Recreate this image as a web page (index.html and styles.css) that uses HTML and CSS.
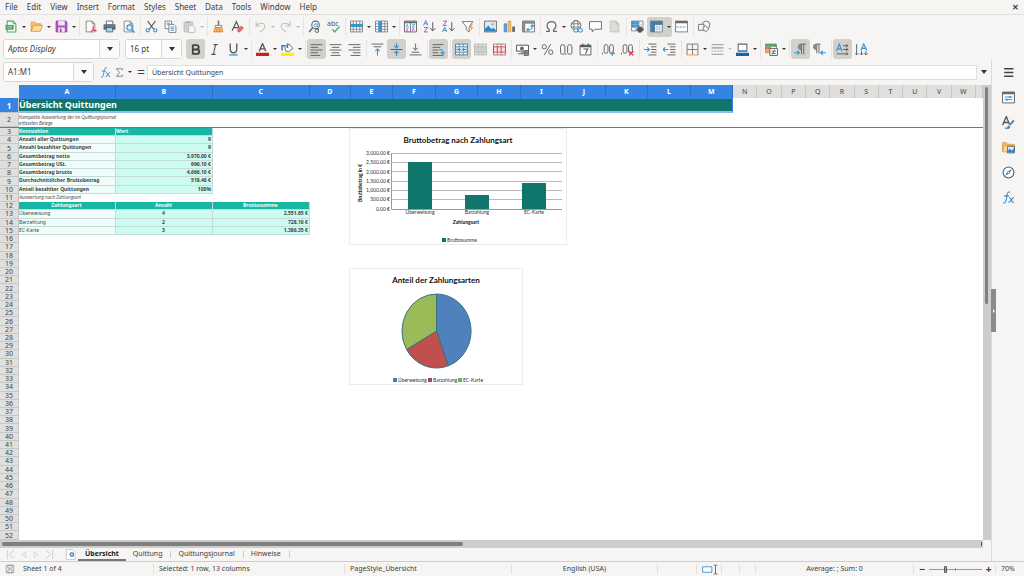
FILE: index.html
```html
<!DOCTYPE html>
<html lang="de">
<head>
<meta charset="utf-8">
<title>Übersicht Quittungen</title>
<link rel="stylesheet" href="styles.css">
</head>
<body>
<svg class="sprite" aria-hidden="true">
  <symbol id="new" viewBox="0 0 24 24"><path d="M4 2h11l5 5v15H4z" fill="#fff" stroke="#4aa564" stroke-width="2"/><path d="M15 2v5h5" fill="#9fd8ae" stroke="#4aa564" stroke-width="1.5"/><path d="M1 9h15v9H1z" fill="#3da35d"/><path d="M4 12h9M4 15h9" stroke="#a8e0b8" stroke-width="1.5"/></symbol>
  <symbol id="open" viewBox="0 0 24 24"><path d="M2 21V4h7l2 3h9v4" fill="#f3c576" stroke="#d9973c" stroke-width="1.5"/><path d="M2 21l4-11h17l-4 11z" fill="#fbdc9c" stroke="#d9973c" stroke-width="1.5"/></symbol>
  <symbol id="save" viewBox="0 0 24 24"><path d="M2 2h18l2 2v18H2z" fill="#b357c4" stroke="#8e3fa5" stroke-width="1.5"/><path d="M6 2h12v8H6z" fill="#f5e6f8"/><path d="M6 14h12v8H6z" fill="#f5e6f8"/><path d="M9 16h3v6H9z" fill="#8e3fa5"/></symbol>
  <symbol id="pdf" viewBox="0 0 24 24"><path d="M4 2h11l5 5v15H4z" fill="#fafafa" stroke="#777" stroke-width="1.5"/><path d="M15 2v5h5" fill="none" stroke="#777" stroke-width="1.5"/><path d="M17 10v6M13 21c3-1 4-3 4-6 1 4 3 5 6 5M13 21c3-3 7-2 10-1" fill="none" stroke="#d63a44" stroke-width="1.7"/></symbol>
  <symbol id="print" viewBox="0 0 24 24"><path d="M6 2h12v7H6z" fill="#fff" stroke="#555" stroke-width="1.5"/><path d="M1 8h22v10H1z" fill="#5f6468"/><path d="M3 11h18" stroke="#4b9bd4" stroke-width="2"/><path d="M6 14h12v8H6z" fill="#a9d4f2" stroke="#555" stroke-width="1.5"/></symbol>
  <symbol id="preview" viewBox="0 0 24 24"><path d="M4 2h11l5 5v15H4z" fill="#fafafa" stroke="#777" stroke-width="1.5"/><path d="M15 2v5h5" fill="none" stroke="#777" stroke-width="1.5"/><circle cx="14" cy="14" r="5" fill="#dff0fb" stroke="#2f8fca" stroke-width="2"/><path d="M18 18l5 5" stroke="#2f8fca" stroke-width="2.2"/></symbol>
  <symbol id="cut" viewBox="0 0 24 24"><path d="M5 2l11 15M19 2L8 17" stroke="#555" stroke-width="2"/><circle cx="5" cy="19" r="3" fill="none" stroke="#3a94d0" stroke-width="2"/><circle cx="19" cy="19" r="3" fill="none" stroke="#3a94d0" stroke-width="2"/></symbol>
  <symbol id="copy" viewBox="0 0 24 24"><path d="M2 2h12v14H2z" fill="#fff" stroke="#777" stroke-width="1.6"/><path d="M5 6h6M5 9h4" stroke="#3a94d0" stroke-width="1.6"/><path d="M9 8h9l4 4v11H9z" fill="#fff" stroke="#777" stroke-width="1.6"/><path d="M12 13h7M12 16h7M12 19h7" stroke="#3a94d0" stroke-width="1.6"/></symbol>
  <symbol id="paste" viewBox="0 0 24 24"><path d="M2 4h16v18H2z" fill="#d4d3d0" stroke="#b5b5b5" stroke-width="1.5"/><path d="M6 2h8v4H6z" fill="#b5b5b5"/><path d="M10 10h8l4 4v9H10z" fill="#f6f5f3" stroke="#b5b5b5" stroke-width="1.5"/></symbol>
  <symbol id="clone" viewBox="0 0 24 24"><path d="M12 1v9" stroke="#777" stroke-width="3"/><path d="M6 10h12v4H6z" fill="#fff" stroke="#777" stroke-width="1.5"/><path d="M6 14h12l2 8H3z" fill="#f6b463" stroke="#d9852c" stroke-width="1.5"/><path d="M9 17v5M14 17v5" stroke="#d9852c" stroke-width="1.5"/></symbol>
  <symbol id="clear" viewBox="0 0 24 24"><path d="M2 20L10 3l6 14M5 14h8" fill="none" stroke="#555" stroke-width="2.2"/><path d="M12 18l7-7 4 4-7 7h-3z" fill="#ef6a70" stroke="#d63a44"/></symbol>
  <symbol id="undo" viewBox="0 0 24 24"><path d="M4 3v8h8M4 11C8 4 20 4 20 12c0 4-4 7-9 10" fill="none" stroke="#c2c1be" stroke-width="2"/></symbol>
  <symbol id="redo" viewBox="0 0 24 24"><path d="M20 3v8h-8M20 11C16 4 4 4 4 12c0 4 4 7 9 10" fill="none" stroke="#c2c1be" stroke-width="2"/></symbol>
  <symbol id="find" viewBox="0 0 24 24"><circle cx="14" cy="9" r="7" fill="#fff" stroke="#666" stroke-width="2"/><path d="M9 14l-7 8" stroke="#666" stroke-width="2.6"/><path d="M17 6v7M17 9a3 3 0 1 0 0 2" fill="none" stroke="#3a94d0" stroke-width="1.8"/><path d="M19 23v-8M19 19a3 3 0 1 0 0 2" fill="none" stroke="#555" stroke-width="1.6"/></symbol>
  <symbol id="spell" viewBox="0 0 24 24"><text x="0" y="11" font-size="13" fill="#555">abc</text><path d="M10 17l4 5 9-10" fill="none" stroke="#3fae6c" stroke-width="2.4"/></symbol>
  <symbol id="row" viewBox="0 0 24 24"><path d="M1 2h22v20H1z" fill="#fff" stroke="#777" stroke-width="1.6"/><path d="M1 17h22M6 2v20M12 2v20M18 2v20" stroke="#777" stroke-width="1.4"/><path d="M1 7h22v6H1z" fill="#3a94d0"/></symbol>
  <symbol id="col" viewBox="0 0 24 24"><path d="M1 2h22v20H1z" fill="#fff" stroke="#777" stroke-width="1.6"/><path d="M1 7h22M1 12h22M1 17h22M18 2v20" stroke="#777" stroke-width="1.4"/><path d="M6 2h7v20H6z" fill="#3a94d0"/></symbol>
  <symbol id="sort" viewBox="0 0 24 24"><path d="M1 2h22v20H1z" fill="#fff" stroke="#666" stroke-width="1.8"/><path d="M1 3h22v3H1z" fill="#666"/><path d="M12 5v17" stroke="#666" stroke-width="1.5"/><path d="M4 13l2-5 2 5M15 8h5l-5 5h5" fill="none" stroke="#3a94d0" stroke-width="1.5"/><path d="M4 15h4l-4 5h4M15 20l2-5 2 5" fill="none" stroke="#b04fc2" stroke-width="1.5"/></symbol>
  <symbol id="az" viewBox="0 0 24 24"><path d="M1 10l4-9 4 9M3 7h5" fill="none" stroke="#3a94d0" stroke-width="1.8"/><path d="M2 14h7l-7 8h7" fill="none" stroke="#b04fc2" stroke-width="1.8"/><path d="M18 4v16M13 15l5 5 5-5" fill="none" stroke="#555" stroke-width="1.8"/></symbol>
  <symbol id="za" viewBox="0 0 24 24"><path d="M2 2h7l-7 8h7" fill="none" stroke="#b04fc2" stroke-width="1.8"/><path d="M1 22l4-9 4 9M3 19h5" fill="none" stroke="#3a94d0" stroke-width="1.8"/><path d="M18 4v16M13 15l5 5 5-5" fill="none" stroke="#555" stroke-width="1.8"/></symbol>
  <symbol id="filter" viewBox="0 0 24 24"><path d="M2 3h20l-7 10v9l-5-4v-5z" fill="#fff" stroke="#777" stroke-width="1.8"/><path d="M20 7l-5 8h4l-3 7 7-9h-4l3-6z" fill="#f4a34b"/></symbol>
  <symbol id="image" viewBox="0 0 24 24"><path d="M1 2h22v20H1z" fill="#d9edf9" stroke="#666" stroke-width="1.6"/><path d="M2 21v-5l6-6 6 7 3-3 5 5v2z" fill="#2f86c4"/><circle cx="16" cy="8" r="2.5" fill="#f4a34b"/></symbol>
  <symbol id="chart" viewBox="0 0 24 24"><path d="M2 7h5v15H2z" fill="#5aa7e0" stroke="#2f78b4"/><path d="M9.500 2h5v20h-5z" fill="#f6c069" stroke="#c9882f"/><path d="M17 12h5v10h-5z" fill="#666"/></symbol>
  <symbol id="pivot" viewBox="0 0 24 24"><path d="M1 2h22v20H1z" fill="#fff" stroke="#777" stroke-width="1.8"/><path d="M1 2h22v5H1zM1 2h5v20H1z" fill="#8a8a8a"/><path d="M10 18c8 1 9-2 9-8M16 12l3-3 3 3M12 15l-3 3 3 3" fill="none" stroke="#3a94d0" stroke-width="2"/></symbol>
  <symbol id="omega" viewBox="0 0 24 24"><path d="M2 21h6v-3C1 13 3 3 12 3s11 10 4 15v3h6" fill="none" stroke="#666" stroke-width="2"/></symbol>
  <symbol id="link" viewBox="0 0 24 24"><circle cx="11" cy="10" r="9" fill="#fff" stroke="#666" stroke-width="1.7"/><ellipse cx="11" cy="10" rx="4" ry="9" fill="none" stroke="#666" stroke-width="1.5"/><path d="M2 7h18M2 13h18" stroke="#666" stroke-width="1.5"/><rect x="7" y="16" width="8" height="6" rx="3" fill="#fff" stroke="#3a94d0" stroke-width="2"/><rect x="15" y="16" width="8" height="6" rx="3" fill="#fff" stroke="#3a94d0" stroke-width="2"/></symbol>
  <symbol id="comment" viewBox="0 0 24 24"><path d="M1 3h22v14H11l-5 5v-5H1z" fill="#fff" stroke="#666" stroke-width="1.7"/></symbol>
  <symbol id="header" viewBox="0 0 24 24"><path d="M4 2h11l5 5v15H4z" fill="#dddcd9" stroke="#bbb" stroke-width="1.5"/><path d="M15 2v5h5" fill="none" stroke="#bbb" stroke-width="1.5"/></symbol>
  <symbol id="area" viewBox="0 0 24 24"><path d="M1 2h21v18H1z" fill="#fff" stroke="#777" stroke-width="1.5"/><path d="M1 2h14v12H1z" fill="#3a94d0"/><path d="M1 8h21M1 14h21M8 2v18M15 2v18" stroke="#9bb4c6" stroke-width="1.2"/><path d="M10 15h13v5H10zM13 12h7v11h-7z" fill="#555"/></symbol>
  <symbol id="freeze" viewBox="0 0 24 24"><path d="M1 2h22v20H1z" fill="#fff" stroke="#777" stroke-width="1.5"/><path d="M1 2h22v6H1zM1 2h7v20H1z" fill="#2f86c4"/><path d="M8 13h15M8 17h15M13 8v14M18 8v14" stroke="#8ec3e8" stroke-width="1.4"/><path d="M8 8v14M8 8h15" stroke="#555" stroke-width="1.5"/></symbol>
  <symbol id="split" viewBox="0 0 24 24"><path d="M1 2h22v20H1z" fill="#fff" stroke="#777" stroke-width="1.7"/><path d="M1 2h22v4H1z" fill="#666"/><path d="M3 13h18" stroke="#3a94d0" stroke-width="2" stroke-dasharray="4 2"/></symbol>
  <symbol id="shapes" viewBox="0 0 24 24"><circle cx="15" cy="9" r="7" fill="none" stroke="#777" stroke-width="1.8"/><path d="M1 8h10v11H1z" fill="#f6f5f3" stroke="#777" stroke-width="1.8"/><path d="M13 10l7 7-6 5-5-6z" fill="#f6f5f3" stroke="#777" stroke-width="1.7"/></symbol>
  <symbol id="bold" viewBox="0 0 24 24"><path d="M7 3v18M7 4h6q5 0 5 4t-5 4H7h7q5 0 5 4t-5 4H7" fill="none" stroke="#444" stroke-width="3.400"/></symbol>
  <symbol id="italic" viewBox="0 0 24 24"><path d="M10 3h8M6 21h8M14 3l-4 18" fill="none" stroke="#555" stroke-width="2"/></symbol>
  <symbol id="under" viewBox="0 0 24 24"><path d="M6 1v10q0 7 6 7t6-7V1" fill="none" stroke="#555" stroke-width="2.4"/><path d="M4 22h16" stroke="#3a94d0" stroke-width="2.4"/></symbol>
  <symbol id="fcolor" viewBox="0 0 24 24"><path d="M6 15l6-14 6 14M8 11h8" fill="none" stroke="#555" stroke-width="2.400"/><path d="M0 18h24v6H0z" fill="#c9211e"/></symbol>
  <symbol id="fill" viewBox="0 0 24 24"><path d="M7 8l8-6 7 8-8 6-5-1z" fill="#fff" stroke="#666" stroke-width="1.7"/><path d="M2 14V5h6M12 1v8" fill="none" stroke="#2f78b4" stroke-width="2.600"/><path d="M0 18h24v6H0z" fill="#ffee00"/></symbol>
  <symbol id="left" viewBox="0 0 24 24"><path d="M1 3h22M1 8h14M1 13h22M1 18h14M1 23h18" stroke="#666" stroke-width="1.800"/></symbol>
  <symbol id="center" viewBox="0 0 24 24"><path d="M1 3h22M5 8h14M1 13h22M5 18h14M3 23h18" stroke="#666" stroke-width="1.800"/></symbol>
  <symbol id="right" viewBox="0 0 24 24"><path d="M1 3h22M9 8h14M1 13h22M9 18h14M5 23h18" stroke="#666" stroke-width="1.800"/></symbol>
  <symbol id="top" viewBox="0 0 24 24"><path d="M1 2h22M5 7h14" stroke="#666" stroke-width="1.800"/><path d="M12 23V11M8 15l4-4 4 4" fill="none" stroke="#3a94d0" stroke-width="2"/></symbol>
  <symbol id="middle" viewBox="0 0 24 24"><path d="M1 12h22" stroke="#666" stroke-width="2"/><path d="M12 0v9M8 5l4 4 4-4M12 24v-9M8 19l4-4 4 4" fill="none" stroke="#3a94d0" stroke-width="2"/></symbol>
  <symbol id="bottom" viewBox="0 0 24 24"><path d="M5 17h14M1 22h22" stroke="#666" stroke-width="1.800"/><path d="M12 1v12M8 9l4 4 4-4" fill="none" stroke="#3a94d0" stroke-width="2"/></symbol>
  <symbol id="wrap" viewBox="0 0 24 24"><path d="M1 3h20M1 8h14M1 13h11M1 18h11M1 23h20" stroke="#666" stroke-width="1.800"/><path d="M13 12c6 0 7 2 7 8M16 17l4 4 3-4" fill="none" stroke="#3a94d0" stroke-width="2"/></symbol>
  <symbol id="merge" viewBox="0 0 24 24"><path d="M1 2h22v20H1z" fill="#fff" stroke="#666" stroke-width="1.600"/><path d="M8 2v5M15 2v5M8 17v5M15 17v5" stroke="#666" stroke-width="1.500"/><path d="M1 7h22v10H1z" fill="#cfe6f6" stroke="#2f86c4" stroke-width="1.600"/><path d="M3 12h7M14 12h7M7 9l3 3-3 3M17 9l-3 3 3 3" fill="none" stroke="#2f86c4" stroke-width="1.700"/></symbol>
  <symbol id="mcells" viewBox="0 0 24 24"><path d="M1 2h22v20H1z" fill="#e4e3e0" stroke="#b5b5b5" stroke-width="1.600"/><path d="M1 7h22v10H1z" fill="#cfcecb"/><path d="M8 2v5M15 2v5M8 17v5M15 17v5M1 7h22M1 17h22" stroke="#b5b5b5" stroke-width="1.500"/></symbol>
  <symbol id="unmerge" viewBox="0 0 24 24"><path d="M1 2h22v20H1z" fill="#fff" stroke="#777" stroke-width="1.600"/><path d="M8 2v5M15 2v5M8 17v5M15 17v5" stroke="#777" stroke-width="1.500"/><path d="M1 7h22v10H1zM8 7v10M15 7v10" fill="#fbe1e2" stroke="#d63a44" stroke-width="1.700"/></symbol>
  <symbol id="money" viewBox="0 0 24 24"><path d="M1 4h22v11H1z" fill="#fff" stroke="#555" stroke-width="1.800"/><circle cx="11" cy="10" r="3.500" fill="#666"/><path d="M4 20h9v-4M15 14h8v9h-8zM15 17h8M15 20h8" fill="#aaa" stroke="#555" stroke-width="1.500"/></symbol>
  <symbol id="percent" viewBox="0 0 24 24"><circle cx="6" cy="7" r="4" fill="none" stroke="#666" stroke-width="1.800"/><circle cx="18" cy="17" r="4" fill="none" stroke="#666" stroke-width="1.800"/><path d="M18 2L6 22" stroke="#666" stroke-width="1.800"/></symbol>
  <symbol id="number" viewBox="0 0 24 24"><rect x="1" y="3" width="8" height="18" rx="4" fill="none" stroke="#666" stroke-width="1.800"/><path d="M11 19v3" stroke="#666" stroke-width="1.800"/><rect x="14" y="3" width="8" height="18" rx="4" fill="none" stroke="#666" stroke-width="1.800"/></symbol>
  <symbol id="date" viewBox="0 0 24 24"><path d="M2 4h20v18H2z" fill="#fff" stroke="#666" stroke-width="1.800"/><path d="M2 4h20v4H2zM6 1h2v4H6zM16 1h2v4h-2z" fill="#555"/><path d="M8 11h8l-4 9" fill="none" stroke="#555" stroke-width="2"/></symbol>
  <symbol id="adddec" viewBox="0 0 24 24"><path d="M1 18v3" stroke="#666" stroke-width="1.800"/><rect x="4" y="3" width="7" height="16" rx="3.500" fill="none" stroke="#666" stroke-width="1.800"/><rect x="14" y="3" width="7" height="16" rx="3.500" fill="none" stroke="#666" stroke-width="1.800"/><path d="M19 15v9M15 19h9" stroke="#3a94d0" stroke-width="2.200"/></symbol>
  <symbol id="deldec" viewBox="0 0 24 24"><path d="M1 18v3" stroke="#666" stroke-width="1.800"/><rect x="4" y="3" width="7" height="16" rx="3.500" fill="none" stroke="#666" stroke-width="1.800"/><rect x="14" y="3" width="7" height="16" rx="3.500" fill="none" stroke="#666" stroke-width="1.800"/><path d="M15 15l8 8M23 15l-8 8" stroke="#d63a44" stroke-width="2.200"/></symbol>
  <symbol id="indent" viewBox="0 0 24 24"><path d="M8 2h15M13 7h10M13 12h10M13 17h10M8 22h15" stroke="#666" stroke-width="1.800"/><path d="M0 12h10M6 8l4 4-4 4" fill="none" stroke="#3a94d0" stroke-width="2"/></symbol>
  <symbol id="outdent" viewBox="0 0 24 24"><path d="M8 2h15M13 7h10M13 12h10M13 17h10M8 22h15" stroke="#666" stroke-width="1.800"/><path d="M0 12h10M4 8l-4 4 4 4" fill="none" stroke="#3a94d0" stroke-width="2"/></symbol>
  <symbol id="borders" viewBox="0 0 24 24"><path d="M2 22V2h20v20M12 2v20M2 12h20" fill="none" stroke="#777" stroke-width="1.700"/><path d="M1 22h22" stroke="#f0a24a" stroke-width="2"/></symbol>
  <symbol id="bstyle" viewBox="0 0 24 24"><path d="M1 3h22M1 21h22" stroke="#aaa" stroke-width="2"/><path d="M1 9h22" stroke="#aaa" stroke-width="3"/><path d="M1 15h22" stroke="#aaa" stroke-width="2" stroke-dasharray="3 2"/></symbol>
  <symbol id="bcolor" viewBox="0 0 24 24"><path d="M4 2h16v13H4z" fill="#fff" stroke="#666" stroke-width="2"/><path d="M4 15h16" stroke="#3a94d0" stroke-width="3"/><path d="M0 18h24v6H0z" fill="#1d5fa3"/></symbol>
  <symbol id="cond" viewBox="0 0 24 24"><path d="M1 2h20v16H1z" fill="#fff" stroke="#777" stroke-width="1.500"/><path d="M1 2h20v5H1z" fill="#4aa564"/><path d="M1 7h10v5H1z" fill="#ef6a70"/><path d="M1 12h8v6H1z" fill="#f4a34b"/><path d="M9 10h14v13H9z" fill="#fff" stroke="#555" stroke-width="1.600"/><path d="M12 15h8M12 19h8M18 12l-4 9" stroke="#555" stroke-width="1.500"/></symbol>
  <symbol id="ltr" viewBox="0 0 24 24"><path d="M22 2h-9a5 5 0 0 0 0 10h1M14 2v19M18 2v19" fill="none" stroke="#666" stroke-width="1.800"/><path d="M13 3h-1a4 4 0 0 0 0 8h2z" fill="#888"/><path d="M0 18h10M6 14l4 4-4 4" fill="none" stroke="#3a94d0" stroke-width="2"/></symbol>
  <symbol id="rtl" viewBox="0 0 24 24"><path d="M14 2H6a5 5 0 0 0 0 10h1M7 2v17M11 2v17" fill="none" stroke="#666" stroke-width="1.800"/><path d="M7 3H5a4 4 0 0 0 0 8h2z" fill="#888"/><path d="M24 18H14M18 14l-4 4 4 4" fill="none" stroke="#3a94d0" stroke-width="2"/></symbol>
  <symbol id="horiz" viewBox="0 0 24 24"><path d="M1 15L6 2l5 13M3 11h7" fill="none" stroke="#3a94d0" stroke-width="2.200"/><path d="M13 5h9M13 12h9M1 20h21M19 2l3 3-3 3M19 9l3 3-3 3M19 17l3 3-3 3" fill="none" stroke="#555" stroke-width="1.700"/></symbol>
  <symbol id="vert" viewBox="0 0 24 24"><path d="M11 14l5-12 6 12M13 10h7" fill="none" stroke="#3a94d0" stroke-width="2.200"/><path d="M3 2v20M12 15v7M20 15v7M0 19l3 3 3-3M9 19l3 3 3-3M17 19l3 3 3-3" fill="none" stroke="#555" stroke-width="1.700"/></symbol>
  <symbol id="fx" viewBox="0 0 24 24"><path d="M2 22c4 1 5-2 6-7l1-7c1-5 2-7 6-6M4 9h9M13 12c5-1 3 10 9 9M22 12c-4 0-5 9-10 9" fill="none" stroke="#3584c8" stroke-width="1.900"/></symbol>
  <symbol id="sum" viewBox="0 0 24 24"><path d="M20 6V2H4l8 10-8 10h16v-4" fill="none" stroke="#666" stroke-width="2"/></symbol>
  <symbol id="menu" viewBox="0 0 24 24"><path d="M4 5h17M4 12h17M4 19h17" stroke="#444" stroke-width="2.600"/></symbol>
  <symbol id="props" viewBox="0 0 24 24"><path d="M1 2h22v20H1z" fill="#fff" stroke="#666" stroke-width="1.800"/><path d="M1 2h22v4H1z" fill="#666"/><path d="M5 11h14M5 16h14" stroke="#3a94d0" stroke-width="1.800"/><path d="M15 9v4M9 14v4" stroke="#3a94d0" stroke-width="2.400"/></symbol>
  <symbol id="styles" viewBox="0 0 24 24"><path d="M1 17L8 1l6 15M4 12h8" fill="none" stroke="#555" stroke-width="2.400"/><path d="M22 8l-8 9" stroke="#777" stroke-width="3.500"/><path d="M5 22c4 1 6-1 6-4l4 2c-1 4-6 5-10 2z" fill="#3584c8" stroke="#3584c8"/></symbol>
  <symbol id="gallery" viewBox="0 0 24 24"><path d="M1 20V3h7l2 3h12v3" fill="#f6c069" stroke="#d9973c" stroke-width="1.500"/><path d="M1 20l3-12h19v12z" fill="#fbdc9c" stroke="#d9973c" stroke-width="1.500"/><path d="M10 10h13v12H10z" fill="#d9edf9" stroke="#555" stroke-width="1.500"/><path d="M11 21v-3l3-4 4 4 4-5v8z" fill="#2f86c4"/></symbol>
  <symbol id="compass" viewBox="0 0 24 24"><circle cx="12" cy="12" r="10" fill="#fff" stroke="#555" stroke-width="1.900"/><path d="M18 6l-4 8-8 4 4-8z" fill="#3584c8"/><circle cx="12" cy="12" r="1.500" fill="#fff"/></symbol>
  <symbol id="disk" viewBox="0 0 24 24"><path d="M3 3h18v18H3zM7 3h10v7H7zM7 14h10v7H7z" fill="none" stroke="#888" stroke-width="1.700"/></symbol>
  <symbol id="first" viewBox="0 0 24 24"><path d="M5 2v20M20 3L9 12l11 9" fill="none" stroke="#cfcecb" stroke-width="2"/></symbol>
  <symbol id="prev" viewBox="0 0 24 24"><path d="M17 6l-8 6 8 6z" fill="none" stroke="#d4d3d0" stroke-width="2"/></symbol>
  <symbol id="next" viewBox="0 0 24 24"><path d="M7 6l8 6-8 6z" fill="none" stroke="#d4d3d0" stroke-width="2"/></symbol>
  <symbol id="last" viewBox="0 0 24 24"><path d="M19 2v20M4 3l11 9-11 9" fill="none" stroke="#cfcecb" stroke-width="2"/></symbol>
  <symbol id="addsheet" viewBox="0 0 24 24"><path d="M3 1h13l6 6v16H3z" fill="#fff" stroke="#bbb" stroke-width="1.500"/><circle cx="15" cy="12" r="5" fill="#3a74a8"/><path d="M15 9v6M12 12h6" stroke="#fff" stroke-width="1.500"/></symbol>
</svg>

<nav class="menubar">
  <button>File</button><button>Edit</button><button>View</button><button>Insert</button><button>Format</button><button>Styles</button><button>Sheet</button><button>Data</button><button>Tools</button><button>Window</button><button>Help</button>
  <button class="close" aria-label="Close">✕</button>
</nav>

<div class="toolbar" role="toolbar" aria-label="Standard">
  <button class="tool" aria-label="New"><svg><use href="#new"/></svg></button><button class="drop" aria-label="New menu"></button>
  <button class="tool" aria-label="Open"><svg><use href="#open"/></svg></button><button class="drop" aria-label="Open menu"></button>
  <button class="tool" aria-label="Save"><svg><use href="#save"/></svg></button><button class="drop" aria-label="Save menu"></button>
  <i class="sep"></i>
  <button class="tool" aria-label="Export as PDF"><svg><use href="#pdf"/></svg></button>
  <button class="tool" aria-label="Print"><svg><use href="#print"/></svg></button>
  <button class="tool" aria-label="Print preview"><svg><use href="#preview"/></svg></button>
  <i class="sep"></i>
  <button class="tool" aria-label="Cut"><svg><use href="#cut"/></svg></button>
  <button class="tool" aria-label="Copy"><svg><use href="#copy"/></svg></button>
  <button class="tool" aria-label="Paste"><svg><use href="#paste"/></svg></button><button class="drop off" aria-label="Paste menu"></button>
  <i class="sep"></i>
  <button class="tool" aria-label="Clone formatting"><svg><use href="#clone"/></svg></button>
  <button class="tool" aria-label="Clear formatting"><svg><use href="#clear"/></svg></button>
  <i class="sep"></i>
  <button class="tool" aria-label="Undo"><svg><use href="#undo"/></svg></button><button class="drop off" aria-label="Undo menu"></button>
  <button class="tool" aria-label="Redo"><svg><use href="#redo"/></svg></button><button class="drop off" aria-label="Redo menu"></button>
  <i class="sep"></i>
  <button class="tool" aria-label="Find and replace"><svg><use href="#find"/></svg></button>
  <button class="tool" aria-label="Spelling"><svg><use href="#spell"/></svg></button>
  <i class="sep"></i>
  <button class="tool" aria-label="Row"><svg><use href="#row"/></svg></button><button class="drop" aria-label="Row menu"></button>
  <button class="tool" aria-label="Column"><svg><use href="#col"/></svg></button><button class="drop" aria-label="Column menu"></button>
  <i class="sep"></i>
  <button class="tool" aria-label="Sort"><svg><use href="#sort"/></svg></button>
  <button class="tool" aria-label="Sort ascending"><svg><use href="#az"/></svg></button>
  <button class="tool" aria-label="Sort descending"><svg><use href="#za"/></svg></button>
  <button class="tool" aria-label="AutoFilter"><svg><use href="#filter"/></svg></button>
  <i class="sep"></i>
  <button class="tool" aria-label="Insert image"><svg><use href="#image"/></svg></button>
  <button class="tool" aria-label="Insert chart"><svg><use href="#chart"/></svg></button>
  <button class="tool" aria-label="Pivot table"><svg><use href="#pivot"/></svg></button>
  <i class="sep"></i>
  <button class="tool" aria-label="Special character"><svg><use href="#omega"/></svg></button><button class="drop" aria-label="Character menu"></button>
  <button class="tool" aria-label="Hyperlink"><svg><use href="#link"/></svg></button>
  <button class="tool" aria-label="Comment"><svg><use href="#comment"/></svg></button>
  <button class="tool" aria-label="Headers and footers"><svg><use href="#header"/></svg></button>
  <i class="sep"></i>
  <button class="tool" aria-label="Print area"><svg><use href="#area"/></svg></button>
  <span class="active group"><button class="tool" aria-label="Freeze"><svg><use href="#freeze"/></svg></button><button class="drop" aria-label="Freeze menu"></button></span>
  <button class="tool" aria-label="Split window"><svg><use href="#split"/></svg></button>
  <i class="sep"></i>
  <button class="tool" aria-label="Draw functions"><svg><use href="#shapes"/></svg></button>
</div>

<div class="toolbar format" role="toolbar" aria-label="Formatting">
  <div class="combo font"><input aria-label="Font name" value="Aptos Display"><button aria-label="Font list"></button></div>
  <div class="combo size"><input aria-label="Font size" value="16 pt"><button aria-label="Size list"></button></div>
  <button class="tool active" aria-label="Bold"><svg><use href="#bold"/></svg></button>
  <button class="tool" aria-label="Italic"><svg><use href="#italic"/></svg></button>
  <button class="tool" aria-label="Underline"><svg><use href="#under"/></svg></button><button class="drop" aria-label="Underline menu"></button>
  <i class="sep"></i>
  <button class="tool" aria-label="Font color"><svg><use href="#fcolor"/></svg></button><button class="drop" aria-label="Font color menu"></button>
  <button class="tool" aria-label="Background color"><svg><use href="#fill"/></svg></button><button class="drop" aria-label="Background menu"></button>
  <i class="sep"></i>
  <button class="tool active" aria-label="Align left"><svg><use href="#left"/></svg></button>
  <button class="tool" aria-label="Align center"><svg><use href="#center"/></svg></button>
  <button class="tool" aria-label="Align right"><svg><use href="#right"/></svg></button>
  <i class="sep"></i>
  <button class="tool" aria-label="Align top"><svg><use href="#top"/></svg></button>
  <button class="tool active" aria-label="Center vertically"><svg><use href="#middle"/></svg></button>
  <button class="tool" aria-label="Align bottom"><svg><use href="#bottom"/></svg></button>
  <i class="sep"></i>
  <button class="tool active" aria-label="Wrap text"><svg><use href="#wrap"/></svg></button>
  <i class="sep"></i>
  <button class="tool active" aria-label="Merge and center"><svg><use href="#merge"/></svg></button>
  <button class="tool" aria-label="Merge cells"><svg><use href="#mcells"/></svg></button>
  <button class="tool" aria-label="Unmerge cells"><svg><use href="#unmerge"/></svg></button>
  <i class="sep"></i>
  <button class="tool" aria-label="Currency"><svg><use href="#money"/></svg></button><button class="drop" aria-label="Currency menu"></button>
  <button class="tool" aria-label="Percent"><svg><use href="#percent"/></svg></button>
  <button class="tool" aria-label="Number"><svg><use href="#number"/></svg></button>
  <button class="tool" aria-label="Date"><svg><use href="#date"/></svg></button>
  <i class="sep"></i>
  <button class="tool" aria-label="Add decimal"><svg><use href="#adddec"/></svg></button>
  <button class="tool" aria-label="Delete decimal"><svg><use href="#deldec"/></svg></button>
  <i class="sep"></i>
  <button class="tool" aria-label="Increase indent"><svg><use href="#indent"/></svg></button>
  <button class="tool" aria-label="Decrease indent"><svg><use href="#outdent"/></svg></button>
  <i class="sep"></i>
  <button class="tool" aria-label="Borders"><svg><use href="#borders"/></svg></button><button class="drop" aria-label="Borders menu"></button>
  <button class="tool" aria-label="Border style"><svg><use href="#bstyle"/></svg></button><button class="drop off" aria-label="Border style menu"></button>
  <button class="tool" aria-label="Border color"><svg><use href="#bcolor"/></svg></button><button class="drop" aria-label="Border color menu"></button>
  <i class="sep"></i>
  <button class="tool" aria-label="Conditional formatting"><svg><use href="#cond"/></svg></button><button class="drop" aria-label="Conditional menu"></button>
  <i class="sep"></i>
  <button class="tool active" aria-label="Left to right"><svg><use href="#ltr"/></svg></button>
  <button class="tool" aria-label="Right to left"><svg><use href="#rtl"/></svg></button>
  <i class="sep"></i>
  <button class="tool active" aria-label="Horizontal text"><svg><use href="#horiz"/></svg></button>
  <button class="tool" aria-label="Vertical text"><svg><use href="#vert"/></svg></button>
</div>

<main class="work">
  <div class="document">
    <div class="formula">
      <div class="combo name"><input aria-label="Name box" value="A1:M1"><button aria-label="Name list"></button></div>
      <button class="tool fx" aria-label="Function wizard"><svg><use href="#fx"/></svg></button>
      <button class="tool sum" aria-label="Select function"><svg><use href="#sum"/></svg></button><button class="drop" aria-label="Function menu"></button>
      <button class="tool equals" aria-label="Formula">=</button>
      <input class="line" aria-label="Input line" value="Übersicht Quittungen">
      <button class="expand" aria-label="Expand formula bar"></button>
    </div>
    <div class="grid-area">
      <div class="sheet">
        <table>
          <thead><tr id="columns"><th class="corner"></th></tr></thead>
          <tbody id="rows">
            <tr class="title"><th>1</th><td>Übersicht Quittungen</td></tr>
            <tr class="intro"><th>2</th><td class="note">Kompakte Auswertung der im Quittungsjournal<br>erfassten Belege</td></tr>
            <tr><th>3</th><td class="head">Kennzahlen</td><td class="head">Wert</td></tr>
            <tr><th>4</th><td class="label">Anzahl aller Quittungen</td><td class="value">9</td></tr>
            <tr><th>5</th><td class="label">Anzahl bezahlter Quittungen</td><td class="value">9</td></tr>
            <tr><th>6</th><td class="label">Gesamtbetrag netto</td><td class="value">3,970.00 €</td></tr>
            <tr><th>7</th><td class="label">Gesamtbetrag USt.</td><td class="value">696.10 €</td></tr>
            <tr><th>8</th><td class="label">Gesamtbetrag brutto</td><td class="value">4,666.10 €</td></tr>
            <tr><th>9</th><td class="label">Durchschnittlicher Bruttobetrag</td><td class="value">518.46 €</td></tr>
            <tr><th>10</th><td class="label">Anteil bezahlter Quittungen</td><td class="value">100%</td></tr>
            <tr><th>11</th><td class="note">Auswertung nach Zahlungsart</td></tr>
            <tr><th>12</th><td class="head mid">Zahlungsart</td><td class="head mid">Anzahl</td><td class="head mid">Bruttosumme</td></tr>
            <tr><th>13</th><td class="label plain">Überweisung</td><td class="value mid">4</td><td class="value">2,551.65 €</td></tr>
            <tr><th>14</th><td class="label plain">Barzahlung</td><td class="value mid">2</td><td class="value">728.10 €</td></tr>
            <tr><th>15</th><td class="label plain">EC-Karte</td><td class="value mid">3</td><td class="value">1,386.35 €</td></tr>
          </tbody>
        </table>

        <svg class="chart bars" viewBox="0 0 218 117" role="img" aria-label="Bruttobetrag nach Zahlungsart">
          <text class="chart-title" x="109" y="15">Bruttobetrag nach Zahlungsart</text>
          <path class="lines" d="M43 25.500h170M43 34.500h170M43 43.500h170M43 53.500h170M43 62.500h170M43 71.500h170"/>
          <path class="axis" d="M42.500 25v56.500h170.500"/>
          <path class="bar" d="M59 34h24v47H59zM116 67h24v14h-24zM173 55h24v26h-24z"/>
          <g class="ticks"><text x="41" y="27">3,000.00 €</text><text x="41" y="36">2,500.00 €</text><text x="41" y="46">2,000.00 €</text><text x="41" y="55">1,500.00 €</text><text x="41" y="64">1,000.00 €</text><text x="41" y="73">500.00 €</text><text x="41" y="83">0.00 €</text></g>
          <g class="names"><text x="71" y="86">Überweisung</text><text x="128" y="86">Barzahlung</text><text x="185" y="86">EC-Karte</text></g>
          <text class="axis-title" x="117" y="96">Zahlungsart</text>
          <text class="axis-title" transform="translate(13 55) rotate(-90)">Bruttobetrag in €</text>
          <rect class="bar" x="93" y="110" width="4" height="4"/><text class="legend" x="98" y="114">Bruttosumme</text>
        </svg>

        <svg class="chart pie" viewBox="0 0 174 117" role="img" aria-label="Anteil der Zahlungsarten">
          <text class="chart-title" x="87" y="15">Anteil der Zahlungsarten</text>
          <g stroke="#3a6f80" stroke-width="1">
            <path fill="#4f81bd" d="M87.500 63V26a34.500 37 0 0 1 11.800 71.800z"/>
            <path fill="#c0504d" d="M87.500 63L99.300 97.800A34.500 37 0 0 1 57.600 81.500z"/>
            <path fill="#9bbb59" d="M87.500 63L57.600 81.500A34.500 37 0 0 1 87.500 26z"/>
          </g>
          <rect x="44" y="110" width="4" height="4" fill="#3f83b8"/><text class="legend" x="49" y="114">Überweisung</text>
          <rect x="79" y="110" width="4" height="4" fill="#a04a4c"/><text class="legend" x="84" y="114">Barzahlung</text>
          <rect x="109" y="110" width="4" height="4" fill="#6fb25a"/><text class="legend" x="114" y="114">EC-Karte</text>
        </svg>
      </div>
      <div class="vscroll"><i></i></div>
    </div>
    <div class="hscroll"><i></i><b></b></div>
    <div class="tabs">
      <div class="steps"><button aria-label="First sheet"><svg><use href="#first"/></svg></button><button aria-label="Previous sheet"><svg><use href="#prev"/></svg></button><button aria-label="Next sheet"><svg><use href="#next"/></svg></button><button aria-label="Last sheet"><svg><use href="#last"/></svg></button></div>
      <button class="add" aria-label="Add sheet"><svg><use href="#addsheet"/></svg></button>
      <button class="tab current">Übersicht</button><button class="tab">Quittung</button><button class="tab">Quittungsjournal</button><button class="tab">Hinweise</button>
    </div>
  </div>
  <aside class="sidebar">
    <button class="grip" aria-label="Hide sidebar"></button>
    <button aria-label="Sidebar settings"><svg><use href="#menu"/></svg></button>
    <button aria-label="Properties"><svg><use href="#props"/></svg></button>
    <button aria-label="Styles"><svg><use href="#styles"/></svg></button>
    <button aria-label="Gallery"><svg><use href="#gallery"/></svg></button>
    <button aria-label="Navigator"><svg><use href="#compass"/></svg></button>
    <button aria-label="Functions"><svg><use href="#fx"/></svg></button>
  </aside>
</main>

<footer class="status">
  <span class="sheetno"><svg><use href="#disk"/></svg>Sheet 1 of 4</span>
  <span>Selected: 1 row, 13 columns</span>
  <span>PageStyle_Übersicht</span>
  <span class="mid">English (USA)</span>
  <span></span>
  <span class="mode"><svg viewBox="0 0 34 24"><path d="M1 6h20v12H1z" fill="#fff" stroke="#3a94d0" stroke-width="2"/><path d="M29 3v18M25 2q4 0 4 2 0-2 4-2M25 22q4 0 4-2 0 2 4 2" fill="none" stroke="#666" stroke-width="2"/></svg></span>
  <span></span>
  <span></span>
  <span class="mid">Average: ; Sum: 0</span>
  <span class="zoom"><button aria-label="Zoom out">−</button><input type="range" min="0" max="100" value="30" aria-label="Zoom"><button aria-label="Zoom in">+</button></span>
  <span>70%</span>
</footer>
<script src="script.js"></script>
</body>
</html>
```
FILE: styles.css
```css
* { box-sizing: border-box; }
body {
  margin: 0; height: 100vh; overflow: hidden;
  display: flex; flex-direction: column;
  background: #f6f5f3; color: #3d3d3d;
  font: 8px/12px "Noto Sans", sans-serif;
}
button, input { font: inherit; color: inherit; margin: 0; padding: 0; border: 0; background: none; min-width: 0; outline: 0; }
button { display: flex; align-items: center; justify-content: center; flex: none; }
svg { display: block; width: 13px; height: 13px; }
.sprite { display: none; }

.menubar { display: flex; gap: 9px; padding: 0 5px; height: 15px; align-items: center; border-bottom: 1px solid #e2e1de; flex: none; }
.close { margin-left: auto; width: 8px; font-weight: bold; }

.toolbar { display: flex; align-items: center; height: 23px; padding-left: 2px; flex: none; }
.format { height: 22px; padding-left: 3px; }
.tool { width: 19px; height: 20px; }
.active { background: #d2d0cc; border-radius: 3px; }
.group { display: flex; }
.drop { width: 6px; height: 20px; }
.drop::before { content: ""; border: 2px solid transparent; border-top-color: #333; border-bottom: 0; }
.drop.off::before { border-top-color: #bbb; }
.sep { width: 1px; height: 18px; margin: 0 1px 0 2px; background: #e6e5e2; }

.combo { display: flex; height: 20px; background: #fff; border: 1px solid #d8d6d3; border-radius: 3px; }
.combo input { flex: 1; padding-left: 4px; }
.combo button { width: 20px; border-left: 1px solid #dddbd8; background: #fafaf9; }
.combo button::before, .expand::before { content: ""; border: 3px solid transparent; border-top: 4px solid #333; border-bottom: 0; }
.font { width: 117px; margin-right: 5px; }
.font input { font-style: italic; }
.size { width: 57px; margin-right: 4px; }

.work { flex: 1; display: flex; min-height: 0; }
.document { flex: 1; display: flex; flex-direction: column; min-width: 0; }
.formula { display: flex; align-items: center; height: 25px; padding: 0 0 1px 3px; flex: none; }
.name { width: 91px; margin-right: 2px; }
.fx svg, .sum svg { width: 11px; height: 11px; }
.sum { width: 9px; }
.sum + .drop { width: 12px; }
.equals { width: 10px; font-size: 14px; }
.line { flex: 1; height: 15px; background: #fff; border: 1px solid #e0dedb; padding-left: 4px; margin-left: 1px; font-size: 7px; }
.expand { width: 14px; height: 16px; }

.grid-area { flex: 1; display: flex; min-height: 0; }
.sheet { flex: 1; position: relative; overflow: hidden; background: #fff; min-width: 0; display: flex; }
table { flex: 1; display: flex; flex-direction: column; font-size: 5px; line-height: 7px; min-width: 0; }
thead { display: block; }
tbody { flex: 1; display: flex; flex-direction: column; min-height: 0; }
tr {
  display: grid; flex: 1 1 0; min-height: 0;
  grid-template-columns: 19px 970fr 970fr 970fr 410fr repeat(9, 425fr) repeat(10, 243fr) 70fr;
}
th, td { padding: 0; min-width: 0; min-height: 0; white-space: nowrap; }
th { display: flex; align-items: center; justify-content: center; background: #dfdfde; color: #444; font-weight: normal; font-size: 7px; border-right: 1px solid #c6c6c5; border-bottom: 1px solid #c6c6c5; }
thead tr { height: 13px; }
thead th { border-bottom: 0; font-size: 7px; }
thead th.picked { background: #3584e4; color: #fff; font-weight: bold; border-color: #2c6fc2; }
th.corner { background: #f6f5f3; border: 0; }
.title { flex: 0 0 15px; }
.title th { background: #3584e4; color: #fff; font-weight: bold; font-size: 8px; }
.title td { grid-column: span 13; background: #10766c; color: #fff; font: bold 9px/12px "Noto Sans", sans-serif; border: 1px solid #3584e4; border-width: 1px 1px 2px 0; border-bottom-color: #8cbcf0; }
.intro { flex: 0 0 15px; border-bottom: 1px solid #777; }
.intro td { line-height: 6px; padding-top: 1px; }
.note { font-family: Lato, sans-serif; font-style: italic; color: #555; }
.head, .label, .value { border-right: 1px solid #c3dcd8; border-bottom: 1px solid #c3dcd8; font-weight: bold; padding: 0 1px 0 0; }
.head { background: #18b7a5; color: #effffc; }
.label { background: #f1fdfb; }
.value { background: #ccfbf1; text-align: right; }
.plain { font-weight: normal; }
.mid { text-align: center; }

.chart { position: absolute; background: #fff; outline: 1px solid #ececec; outline-offset: -1px; font-family: "Noto Sans", sans-serif; }
.bars { left: 349px; top: 43px; width: 218px; height: 117px; }
.pie { left: 349px; top: 183px; width: 174px; height: 117px; }
.chart-title { font: bold 8px Lato, sans-serif; text-anchor: middle; fill: #111; }
.lines { stroke: #bbb; fill: none; }
.axis { stroke: #999; fill: none; }
.bar { fill: #10766c; }
.ticks, .names, .legend { font: 5px Lato, sans-serif; fill: #333; }
.ticks { text-anchor: end; }
.names, .axis-title { text-anchor: middle; }
.axis-title { font: bold 5px Lato, sans-serif; fill: #111; }

.vscroll { width: 8px; background: #cdcdcd; padding: 2px 3px 0 2px; }
.vscroll i { display: block; height: 48%; background: #808080; border-radius: 2px; }
.hscroll { height: 8px; margin-right: 8px; padding: 2px 1px 2px 2px; background: #cdcdcd; display: flex; justify-content: space-between; flex: none; }
.hscroll i { width: 47%; background: #7f7f7f; border-radius: 2px; }
.hscroll b { width: 1px; background: #555; }

.tabs { display: flex; height: 13px; align-items: stretch; flex: none; font-size: 7px; }
.steps { display: flex; width: 62px; padding-left: 4px; }
.steps button { width: 13px; }
.add { width: 16px; }
.tabs svg { width: 11px; height: 11px; }
.tab { padding: 0 7px; position: relative; margin-right: 2px; border-bottom: 2px solid transparent; }
.tab + .tab::after { content: ""; position: absolute; right: -2px; top: 3px; width: 1px; height: 7px; background: #ccc; }
.current { font-weight: bold; color: #222; border-bottom-color: #777; margin-right: 0; }

.sidebar { width: 33px; position: relative; border-left: 1px solid #dddbd8; display: flex; flex-direction: column; align-items: center; gap: 5px; padding: 2px 0 0 1px; }
.sidebar button { width: 20px; height: 20px; }
.sidebar .grip { position: absolute; left: -1px; top: 229px; width: 5px; height: 43px; background: #8b8b8b; }
.grip::before { content: ""; border: 2px solid transparent; border-left-color: #fff; border-right: 0; }

.status {
  display: grid; height: 15px; flex: none; align-items: center; border-top: 1px solid #cfcdca; font-size: 7px;
  grid-template-columns: 154fr 191fr 167fr 146fr 39fr 25fr 18fr 16fr 158fr 82fr 28fr;
}
.status span { height: 10px; line-height: 10px; padding-left: 5px; border-right: 1px solid #e2e0dd; white-space: nowrap; }
.status span:last-child { border: 0; }
.sheetno { display: flex; gap: 8px; }
.sheetno svg { width: 10px; height: 10px; }
.status .mid { padding: 0; }
.mode svg { width: 16px; height: 11px; }
.status .zoom { display: flex; align-items: center; gap: 3px; padding-right: 3px; }
.zoom button { width: 7px; font-weight: bold; font-size: 10px; }
.zoom input { appearance: none; flex: 1; width: 0; height: 8px; background: linear-gradient(#999, #999) center / 100% 1px no-repeat, linear-gradient(#999, #999) center / 1px 3px no-repeat; }
.zoom input::-webkit-slider-thumb { appearance: none; width: 3px; height: 7px; border-radius: 1px; background: #aaa; border: 1px solid #555; }
```
FILE: script.js
```js
// Column letters A to W, plus the partly visible column X
const columns = document.getElementById("columns");
for (let i = 0; i < 24; i++) {
  const th = document.createElement("th");
  th.textContent = i < 23 ? String.fromCharCode(65 + i) : "";
  if (i < 13) th.className = "picked";
  columns.append(th);
}
// Empty rows below the data
const rows = document.getElementById("rows");
for (let n = 16; n <= 52; n++) {
  const tr = document.createElement("tr");
  const th = document.createElement("th");
  th.textContent = n;
  tr.append(th);
  rows.append(tr);
}
```
